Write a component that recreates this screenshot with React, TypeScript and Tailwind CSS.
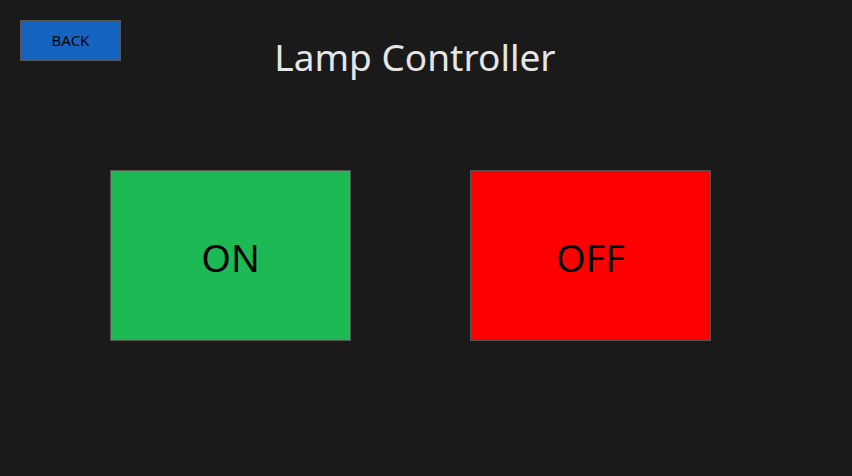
import React, { useState } from 'react';

export default function App() {
  const [lampOn, setLampOn] = useState(false);

  return (
    <div
      className="w-full h-[476px] bg-[#1a1a1a] overflow-hidden"
      style={{ fontFamily: '"Noto Sans", "Open Sans", sans-serif' }}
    >
      {/* Header */}
      <div className="flex items-start pt-5 pl-5">
        <button className="w-[101px] h-[41px] bg-[#1565c0] border border-[#555555] text-black text-[15px] leading-none flex items-center justify-center">
          BACK
        </button>
        <h1 className="flex-1 mr-[143px] text-center text-[#e6e6e6] text-[37px] leading-none mt-[18px]">
          Lamp Controller
        </h1>
      </div>

      {/* Controls */}
      <div className="flex gap-[119px] pl-[110px] mt-[95px]">
        <button
          onClick={() => setLampOn(true)}
          className="w-[241px] h-[171px] bg-[#1db954] border border-[#555555] text-black text-[38px] pt-1 flex items-center justify-center"
        >
          ON
        </button>
        <button
          onClick={() => setLampOn(false)}
          className="w-[241px] h-[171px] bg-[#ff0000] border border-[#555555] text-black text-[38px] pt-1 flex items-center justify-center"
        >
          OFF
        </button>
      </div>
      <span className="hidden">{lampOn ? 'on' : 'off'}</span>
    </div>
  );
}
